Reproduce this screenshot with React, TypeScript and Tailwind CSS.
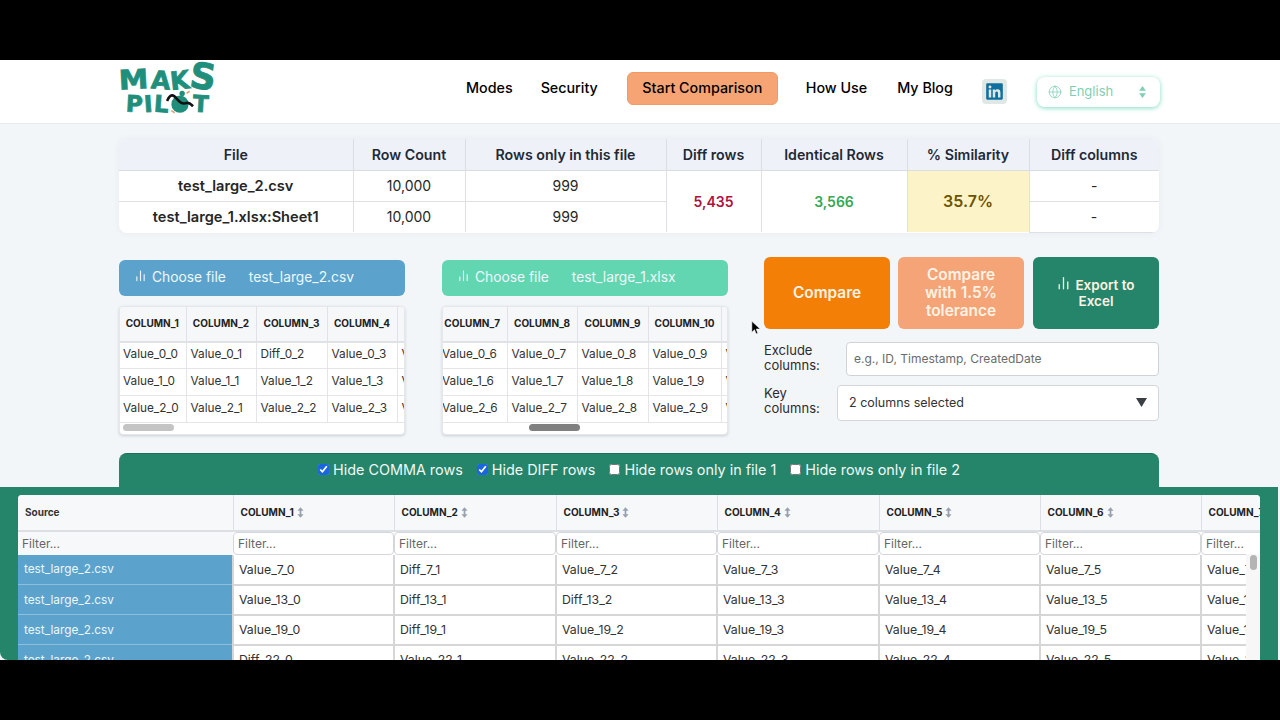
import React from 'react';
import { FaLinkedin } from 'react-icons/fa';
import { Globe } from 'lucide-react';

const BarsIcon = ({ className }: { className?: string }) => (
  <svg viewBox="0 0 12 14" className={className} fill="none" stroke="currentColor" strokeWidth="1.2" strokeLinecap="round">
    <path d="M2 8v4M6 1.500v10.500M10 5.500v6.500" />
  </svg>
);

const SortIcon = () => (
  <svg viewBox="0 0 8 12" className="w-[7px] h-[11px] text-gray-400 shrink-0" fill="currentColor">
    <path d="M4 0 7.500 4H5v4h2.500L4 12 .5 8H3V4H.5z" />
  </svg>
);

const Logo = () => {
  const letter = 'inline-block font-black text-[#1f8f7c] leading-none [-webkit-text-stroke:0.8px_#1f8f7c]';
  return (
    <div className="w-[96px] h-[48px] flex flex-col items-center" style={{ fontFamily: '"DejaVu Sans", sans-serif' }}>
      <div className="flex items-end h-[25px] text-[25px]">
        <span className={`${letter} text-[27px] scale-x-110 rotate-[-3deg] ml-[2px] mr-[4px]`}>M</span>
        <span className={`${letter} rotate-[4deg]`}>A</span>
        <span className={`${letter} rotate-[-6deg]`}>K</span>
        <span className={`${letter} text-[36px] rotate-[8deg] ml-[1px] mb-[-2px]`}>S</span>
      </div>
      <div className="flex items-center h-[23px] text-[23px]">
        <span className={`${letter} rotate-[3deg]`}>P</span>
        <span className={`${letter} rotate-[-4deg] ml-[2px]`}>I</span>
        <span className={`${letter} rotate-[4deg] ml-[1px]`}>L</span>
        <svg viewBox="0 0 26 24" className="w-[28px] h-[26px] -ml-[3px] -mt-[4px]">
          <circle cx="13" cy="14" r="8" fill="#1f8f7c" />
          <circle cx="15" cy="4" r="2.500" fill="#1f8f7c" />
          <path d="M1 11C4 4 7 5 10 9s6 5 9 4 4 1 6 3" fill="none" stroke="#111" strokeWidth="2.400" />
          <path d="M19 4l3-2M5 20l3 2" stroke="#d9a679" strokeWidth="1.500" />
        </svg>
        <span className={`${letter} -ml-[1px] rotate-[3deg]`}>T</span>
      </div>
    </div>
  );
};

const Header = () => (
  <header className="h-[64px] bg-white border-b border-[#e7eaee] shrink-0 pl-[119px] flex items-center">
    <Logo />
    <nav className="ml-[251px] mb-[7px] flex items-center whitespace-nowrap text-[14.300px] font-medium text-black">
      <span>Modes</span>
      <span className="ml-[28px]">Security</span>
      <span className="ml-[29px] h-[33px] w-[151px] rounded-md bg-[#f6a474] border border-[#f19a66] flex items-center justify-center">Start Comparison</span>
      <span className="ml-[28px]">How Use</span>
      <span className="ml-[30px]">My Blog</span>
      <span className="ml-[29px] mt-[6px] w-[25px] h-[25px] rounded bg-[#dfe8e5] flex items-center justify-center">
        <FaLinkedin className="text-[19px] text-[#0f6f9f]" />
      </span>
    </nav>
    <div className="ml-[30px] w-[123px] h-[30px] rounded-lg bg-white shadow-[0_1px_5px_#7fdcc0] flex items-center pl-[11px] pr-[13px] text-[13px] text-[#7fcfb5]">
      <Globe className="w-[14px] h-[14px]" strokeWidth={1.300} />
      <span className="ml-[7px]">English</span>
      <svg viewBox="0 0 10 14" className="ml-auto w-[9px] h-[12px]" fill="#7fcfb5">
        <path d="M5 0l4 5.500H1zM5 14 1 8.500h8z" />
      </svg>
    </div>
  </header>
);

const SummaryTable = () => {
  const th = 'border-r border-b border-[#d9dee5] font-semibold text-[14.200px] text-[#1f2937] bg-[#eef2f8] h-[31px]';
  const td = 'border-r border-b border-[#dde1e6] text-[14px] text-[#262626] text-center h-[31px]';
  const fileTd = 'pt-[2px] border-r border-[#dde1e6] text-[14.600px] font-semibold text-[#262626] text-center h-[31px]';
  return (
    <div className="mt-[15px] w-[1040px] rounded-lg overflow-hidden bg-white shadow-[0_0_6px_#e5e9ee]">
      <table className="w-full table-fixed border-collapse">
        <colgroup>
          <col className="w-[234px]" />
          <col className="w-[112px]" />
          <col className="w-[201px]" />
          <col className="w-[95px]" />
          <col className="w-[146px]" />
          <col className="w-[122px]" />
          <col className="w-[130px]" />
        </colgroup>
        <thead>
          <tr>
            {['File', 'Row Count', 'Rows only in this file', 'Diff rows', 'Identical Rows', '% Similarity'].map(h => (
              <th key={h} className={th}>{h}</th>
            ))}
            <th className={`${th} border-r-0`}>Diff columns</th>
          </tr>
        </thead>
        <tbody>
          <tr>
            <td className={`${fileTd} border-b`}>test_large_2.csv</td>
            <td className={td}>10,000</td>
            <td className={td}>999</td>
            <td rowSpan={2} className="border-r border-[#dde1e6] text-center text-[14px] font-semibold text-[#b0123f]">5,435</td>
            <td rowSpan={2} className="border-r border-[#dde1e6] text-center text-[14px] font-semibold text-[#34a853]">3,566</td>
            <td rowSpan={2} className="border-r border-[#dde1e6] text-center text-[16px] font-semibold text-[#6b5400] bg-[#fdf3c8]">35.7%</td>
            <td className={`${td} border-r-0`}>-</td>
          </tr>
          <tr>
            <td className={fileTd}>test_large_1.xlsx:Sheet1</td>
            <td className={`${td} border-b-0`}>10,000</td>
            <td className={`${td} border-b-0`}>999</td>
            <td className={`${td} border-0`}>-</td>
          </tr>
        </tbody>
      </table>
    </div>
  );
};

const PreviewTable = ({ cols, shifted, thumb }: { cols: number[]; shifted: boolean; thumb: string }) => (
  <div className="relative mt-[10px] w-[286px] h-[129px] rounded bg-white overflow-hidden shadow-[0_1px_3px_#c9ced4] border border-[#e5e7eb]">
    <table className={`table-fixed border-collapse w-[350px] text-[#333] ${shifted ? '-ml-[5px]' : '-ml-[1px]'}`}>
      <colgroup>
        <col className={shifted ? 'w-[69px]' : 'w-[67px]'} />
        <col className="w-[70px]" />
        <col className="w-[71px]" />
        <col className={shifted ? 'w-[73px]' : 'w-[70px]'} />
        <col className="w-[72px]" />
      </colgroup>
      <thead>
        <tr>
          {cols.map(c => (
            <th key={c} className="h-[35px] bg-[#f6f7f9] border-r border-b-2 border-[#dfe2e6] text-[10px] font-bold text-[#222]">COLUMN_{c}</th>
          ))}
          <th className="bg-[#f6f7f9] border-b-2 border-[#dfe2e6]"></th>
        </tr>
      </thead>
      <tbody>
        {[0, 1, 2].map(r => (
          <tr key={r}>
            {cols.map(c => (
              <td key={c} className="h-[27px] border-r border-b border-[#e3e5e8] pl-[4px] text-[11.800px] whitespace-nowrap overflow-hidden">
                {r === 0 && c === 3 ? 'Diff_0_2' : `Value_${r}_${c - 1}`}
              </td>
            ))}
            <td className="border-b border-[#e3e5e8] pl-[4px] text-[11.800px] overflow-hidden whitespace-nowrap">Value</td>
          </tr>
        ))}
      </tbody>
    </table>
    <div className={`absolute bottom-[3px] h-[7px] w-[51px] rounded-full ${thumb}`}></div>
  </div>
);

const FilePanel = ({ color, name, cols, shifted, thumb, className }: { color: string; name: string; cols: number[]; shifted: boolean; thumb: string; className?: string }) => (
  <div className={className}>
    <div className={`h-[36px] w-[286px] rounded-md flex items-center pl-[16px] text-[13.800px] text-[#eef7fb] ${color}`}>
      <BarsIcon className="w-[11px] h-[14px] -mt-[3px]" />
      <span className="ml-[6px]">Choose file</span>
      <span className="ml-[23px]">{name}</span>
    </div>
    <PreviewTable cols={cols} shifted={shifted} thumb={thumb} />
  </div>
);

const Controls = () => {
  const btn = 'w-[126px] h-[72px] rounded-md flex items-center justify-center text-center font-semibold text-[#fdf3e4]';
  return (
    <div className="ml-[36px] w-[395px] -mt-[3px]">
      <div className="flex gap-[8px]">
        <div className={`${btn} bg-[#f47f06] text-[15.400px]`}>Compare</div>
        <div className={`${btn} bg-[#f5a477] text-[15.400px] leading-[18px] px-[16px]`}>Compare with 1.5% tolerance</div>
        <div className={`${btn} ml-[1px] bg-[#24856a] text-[13.500px] leading-[16px] px-[12px]`}>
          <span>
            <BarsIcon className="inline-block w-[13px] h-[15px] mr-[5px] -mt-[4px]" />
            Export to Excel
          </span>
        </div>
      </div>
      <div className="mt-[13px] flex items-center text-[13px] leading-[15px] text-[#2b2b2b]">
        <span className="w-[82px] -mt-[2px]">Exclude columns:</span>
        <div className="flex-1 h-[34px] bg-white border border-[#cfd3d8] rounded pl-[7px] flex items-center text-[12px] text-[#6b6b6b]">e.g., ID, Timestamp, CreatedDate</div>
      </div>
      <div className="mt-[9px] flex items-center text-[13px] leading-[15px] text-[#2b2b2b]">
        <span className="w-[73px] -mt-[3px]">Key columns:</span>
        <div className="flex-1 h-[36px] bg-white border border-[#d3d7dc] rounded pl-[11px] pr-[11px] flex items-center text-[12.500px] text-[#333]">
          2 columns selected
          <svg viewBox="0 0 10 8" className="ml-auto w-[11px] h-[9px]" fill="#3a3f44">
            <path d="M0 0h10L5 8z" />
          </svg>
        </div>
      </div>
    </div>
  );
};

const FilterBar = () => (
  <div className="mt-[18px] ml-[119px] w-[1040px] h-[34px] shrink-0 bg-[#24856a] rounded-t-lg border-t border-[#1c6f58] flex items-center justify-center gap-[14px] text-[14.400px] text-[#f2f7f5]">
    {[
      ['Hide COMMA rows', true],
      ['Hide DIFF rows', true],
      ['Hide rows only in file 1', false],
      ['Hide rows only in file 2', false],
    ].map(([label, on]) => (
      <label key={label as string} className="flex items-center gap-[4px]">
        <input type="checkbox" checked={on as boolean} readOnly className="w-[11px] h-[11px] accent-[#1a66e0]" />
        {label}
      </label>
    ))}
  </div>
);

const gridCols = [215, 161, 162, 161, 162, 161, 161, 161];

const DataGrid = () => {
  const rows = [
    { id: 7, vals: ['Value_7_0', 'Diff_7_1', 'Value_7_2', 'Value_7_3', 'Value_7_4', 'Value_7_5', 'Value_7_6'] },
    { id: 13, vals: ['Value_13_0', 'Diff_13_1', 'Diff_13_2', 'Value_13_3', 'Value_13_4', 'Value_13_5', 'Value_13_6'] },
    { id: 19, vals: ['Value_19_0', 'Diff_19_1', 'Value_19_2', 'Value_19_3', 'Value_19_4', 'Value_19_5', 'Value_19_6'] },
    { id: 22, vals: ['Diff_22_0', 'Value_22_1', 'Value_22_2', 'Value_22_3', 'Value_22_4', 'Value_22_5', 'Value_22_6'] },
  ];
  return (
    <div className="flex-1 min-h-0 w-[1278px] bg-[#24856a] rounded-bl-lg pl-[18px] pr-[18px] pt-[8px] overflow-hidden">
      <div className="relative h-[200px] w-[1242px] rounded-t bg-white overflow-hidden">
        <table className="table-fixed border-collapse w-[1306px] text-[#333]">
          <colgroup>
            {gridCols.map((w, i) => (
              <col key={i} style={{ width: w }} />
            ))}
          </colgroup>
          <thead>
            <tr>
              <th className="h-[36px] pt-[1px] bg-[#f6f8fa] border-r border-b-2 border-[#dcdfe3] text-left pl-[7px] text-[10px] font-bold text-[#333]">Source</th>
              {[1, 2, 3, 4, 5, 6, 7].map(c => (
                <th key={c} className="pt-[1px] bg-[#f6f8fa] border-r border-b-2 border-[#dcdfe3] text-left pl-[7px] text-[10px] font-bold text-[#222]">
                  <span className="flex items-center gap-[3px]">COLUMN_{c} <SortIcon /></span>
                </th>
              ))}
            </tr>
            <tr>
              <td className="h-[24px] pt-[1px] bg-[#f6f8fa] pl-[4px] text-[12px] text-[#666]">Filter...</td>
              {[1, 2, 3, 4, 5, 6, 7].map(c => (
                <td key={c} className="p-0">
                  <div className="h-[23px] pt-[1px] bg-white border border-[#d3d6da] rounded-sm pl-[4px] flex items-center text-[12px] text-[#666]">Filter...</div>
                </td>
              ))}
            </tr>
          </thead>
          <tbody>
            {rows.map(row => (
              <tr key={row.id}>
                <td className="h-[30px] pt-[2px] bg-[#5ba3cc] border-b border-[#8dbfdb] pl-[6px] text-[11.800px] text-[#eef6fa]">test_large_2.csv</td>
                {row.vals.map((v, i) => (
                  <td key={i} className="pt-[2px] border-l-2 border-b-2 border-[#d6d6d6] pl-[5px] text-[12.300px] whitespace-nowrap overflow-hidden">{v}</td>
                ))}
              </tr>
            ))}
          </tbody>
        </table>
        <div className="absolute right-0 top-[59px] bottom-0 w-[14px] bg-[#f7f7f7]">
          <div className="mx-auto mt-[1px] w-[7px] h-[15px] rounded-full bg-[#b4b4b4]"></div>
        </div>
      </div>
    </div>
  );
};

export default function App() {
  return (
    <div className="relative w-[1280px] h-[720px] bg-black py-[60px] overflow-hidden" style={{ fontFamily: 'Inter, sans-serif' }}>
      <div className="h-[600px] bg-[#f3f6f9] flex flex-col overflow-hidden">
        <Header />
        <div className="pl-[119px] shrink-0">
          <SummaryTable />
          <div className="mt-[27px] flex items-start">
            <FilePanel color="bg-[#5ba3cc]" name="test_large_2.csv" cols={[1, 2, 3, 4]} shifted={false} thumb="left-[3px] bg-[#c4c4c4]" />
            <FilePanel className="ml-[37px]" color="bg-[#62d6b0]" name="test_large_1.xlsx" cols={[7, 8, 9, 10]} shifted thumb="left-[86px] bg-[#808080]" />
            <Controls />
          </div>
        </div>
        <FilterBar />
        <DataGrid />
      </div>
      <svg viewBox="0 0 12 18" className="absolute left-[751px] top-[320px] w-[10px] h-[16px]" fill="#000" stroke="#fff" strokeWidth="0.600">
        <path d="M1 1v13l3.200-3 2 5 2-.8-2-5H11z" />
      </svg>
    </div>
  );
}
